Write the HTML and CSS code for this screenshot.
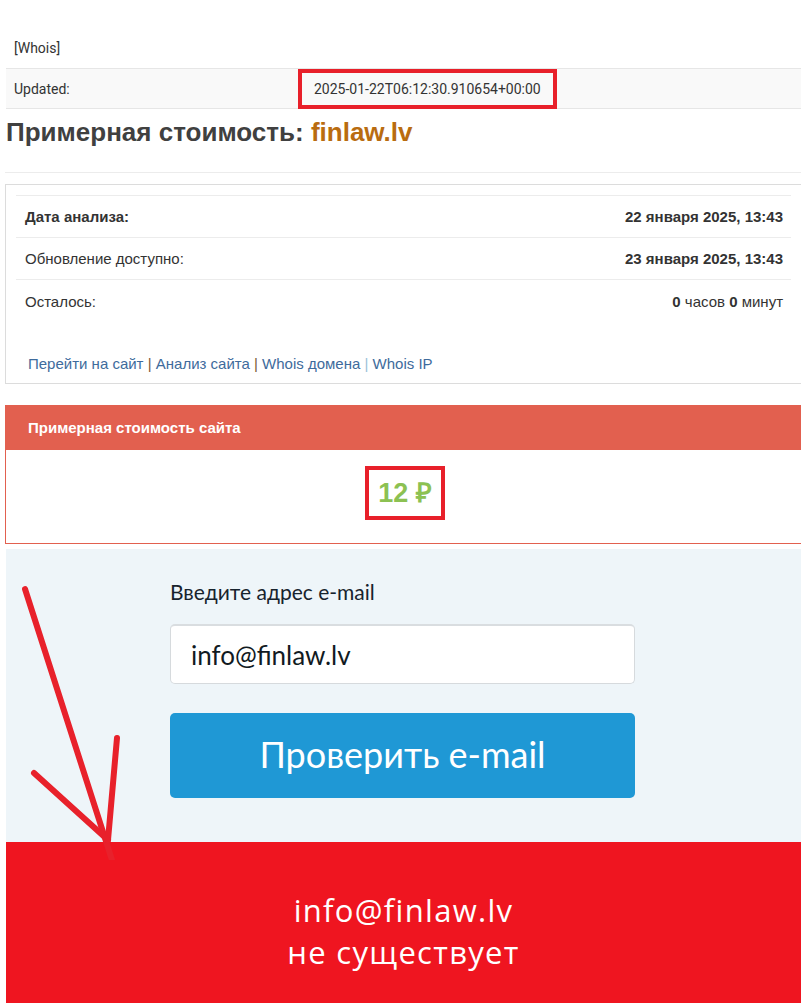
FILE: index.html
```html
<!DOCTYPE html>
<html lang="ru">
<head>
<meta charset="utf-8">
<title>finlaw.lv</title>
<link rel="stylesheet" href="styles.css">
</head>
<body>
<div class="page">
  <div class="whois">
    <div class="wrow"><div class="wcell">[Whois]</div></div>
    <div class="wrow alt">
      <div class="wcell wkey">Updated:</div>
      <div class="wcell wval"><span class="mark mark-date">2025-01-22T06:12:30.910654+00:00</span></div>
    </div>
  </div>

  <h1 class="title">Примерная стоимость: <span class="domain">finlaw.lv</span></h1>
  <div class="rule"></div>

  <div class="card">
    <div class="trow"><span class="tk strong">Дата анализа:</span><span class="tv strong">22 января 2025, 13:43</span></div>
    <div class="trow"><span class="tk">Обновление доступно:</span><span class="tv strong">23 января 2025, 13:43</span></div>
    <div class="trow"><span class="tk">Осталось:</span><span class="tv"><b>0</b> часов <b>0</b> минут</span></div>
    <div class="links"><a>Перейти на сайт</a> <span class="sep">|</span> <a>Анализ сайта</a> <span class="sep">|</span> <a>Whois домена</a> <span class="sep light">|</span> <a>Whois IP</a></div>
  </div>

  <div class="price">
    <div class="price-head">Примерная стоимость сайта</div>
    <div class="price-body"><span class="mark mark-price">12 ₽</span></div>
  </div>

  <div class="check">
    <div class="form">
      <div class="label">Введите адрес e-mail</div>
      <div class="input">info@finlaw.lv</div>
      <div class="btn">Проверить e-mail</div>
    </div>
  </div>
  <div class="result">
    <div class="rline">info@finlaw.lv</div>
    <div class="rline">не существует</div>
  </div>

  <svg class="arrow" width="140" height="300" viewBox="0 0 140 300">
    <g stroke="#e8212b" stroke-width="6" stroke-linecap="round" fill="none">
      <line x1="25" y1="29" x2="112" y2="300"/>
      <line x1="117" y1="178" x2="108" y2="280"/>
      <line x1="34" y1="213" x2="108" y2="280"/>
    </g>
  </svg>
</div>
</body>
</html>
```

FILE: styles.css
```css
html, body { margin: 0; padding: 0; background: #fff; }
.page { position: relative; width: 801px; min-height: 1003px; overflow: hidden; }

.whois { margin: 28px 0 0 6px; font-family: Roboto, "Liberation Sans", sans-serif; font-size: 14px; color: #333; }
.wrow { display: flex; height: 40px; align-items: center; border-bottom: 1px solid #e6e6e6; }
.wrow.alt { background: #f9f9f9; height: 39px; }
.wcell { padding-left: 8px; }
.wkey { width: 284px; }
.wval { padding-left: 0; }
.mark { display: inline-block; border: 4px solid #e8202a; box-sizing: border-box; }
.mark-date { padding: 0 12px 0 12px; height: 40px; line-height: 32px; margin-top: 1px; }

.title { margin: 8px 0 0 6px; font-family: "Liberation Sans", Arial, sans-serif; font-weight: bold; font-size: 26px; color: #404040; line-height: 30px; }
.domain { color: #b96c10; }
.rule { margin: 25px 0 0 5px; border-top: 1px solid #ececec; }

.card { margin: 11px 0 0 5px; border: 1px solid #dcdcdc; border-right: none; padding: 10px 10px 0 10px; height: 188px; font-family: "Liberation Sans", Arial, sans-serif; font-size: 15px; color: #333; }
.trow { display: flex; justify-content: space-between; align-items: center; height: 41px; border-top: 1px solid #ececec; padding: 0 8px 0 9px; }
.trow:nth-child(3) { height: 42px; }
.strong, .tv b { font-weight: bold; }
.links { margin-top: 33px; padding-left: 12px; font-size: 15px; color: #3e6b9c; }
.links a { color: #3e6b9c; }
.sep { color: #7a5a3a; }
.sep.light { color: #9bbfd9; }

.price { margin: 21px 0 0 5px; border: 1px solid #e2604f; border-right: none; font-family: "Liberation Sans", Arial, sans-serif; }
.price-head { background: #e2604f; color: #fff; font-weight: bold; font-size: 15px; height: 44px; line-height: 44px; padding-left: 22px; }
.price-body { height: 93px; display: flex; justify-content: center; align-items: center; }
.mark-price { width: 80px; height: 54px; line-height: 46px; text-align: center; color: #8cc152; font-weight: bold; font-size: 27px; margin-left: 3px; margin-top: -8px; }

.check { margin: 5px 0 0 6px; background: #eef5f9; height: 293px; font-family: Lato, "Open Sans", sans-serif; }
.form { margin-left: 164px; width: 465px; padding-top: 30px; }
.label { font-size: 21px; color: #17232d; height: 26px; line-height: 26px; }
.input { margin-top: 19px; height: 60px; line-height: 58px; background: #fff; border: 1px solid #d6dadd; border-top: 2px solid #d9dde0; border-radius: 5px; box-sizing: border-box; padding-left: 20px; font-size: 26px; color: #111a22; }
.btn { margin-top: 29px; height: 85px; line-height: 82px; background: #1f98d5; border-radius: 5px; color: #fff; text-align: center; font-size: 36px; }

.result { margin-left: 6px; background: #ef1520; height: 161px; box-sizing: border-box; padding-top: 47px; text-align: center; color: #fff; font-family: "Open Sans", Lato, sans-serif; font-size: 31px; }
.rline { line-height: 42px; letter-spacing: 1.3px; }

.arrow { position: absolute; left: 0; top: 560px; }
```
